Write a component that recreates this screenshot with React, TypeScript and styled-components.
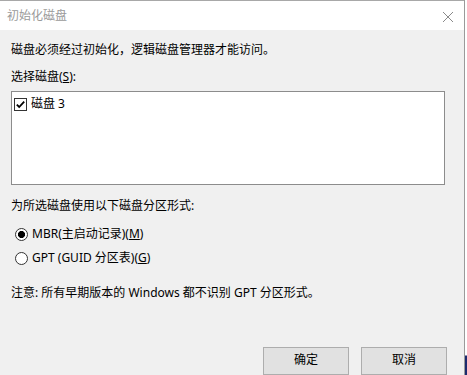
import React, { useState } from 'react'
import styled, { createGlobalStyle } from 'styled-components'

const GlobalStyle = createGlobalStyle`
  html, body {
    margin: 0;
    padding: 0;
    background: #ffffff;
    overflow: hidden;
  }
  body {
    font-family: "Noto Sans", "Noto Sans CJK SC", sans-serif;
    font-size: 12px;
  }
`

export default function App() {
  const [checked, setChecked] = useState(true)
  const [style, setStyle] = useState<'mbr' | 'gpt'>('mbr')

  return (
    <Page>
      <GlobalStyle />
      <Dialog>
        <TitleBar>
          <Title>初始化磁盘</Title>
          <CloseButton aria-label="关闭">
            <svg width="12" height="12" viewBox="0 0 12 12">
              <path d="M1 1 L11 11 M11 1 L1 11" stroke="#8a8a8a" strokeWidth="1" fill="none" />
            </svg>
          </CloseButton>
        </TitleBar>
        <Body>
          <Intro>磁盘必须经过初始化，逻辑磁盘管理器才能访问。</Intro>
          <Label>
            选择磁盘(<u>S</u>):
          </Label>
          <ListBox>
            <ListItem onClick={() => setChecked(c => !c)}>
              <CheckBox>
                <svg width="13" height="13" viewBox="0 0 13 13">
                  <rect x="0.5" y="0.5" width="12" height="12" fill="#fff" stroke="#333" />
                  {checked && (
                    <path d="M2.8 6.6 L5.2 9 L10.2 3.6" stroke="#000" strokeWidth="1.8" fill="none" />
                  )}
                </svg>
              </CheckBox>
              <span>磁盘 3</span>
            </ListItem>
          </ListBox>
          <SectionLabel>为所选磁盘使用以下磁盘分区形式:</SectionLabel>
          <RadioGroup>
            <RadioRow onClick={() => setStyle('mbr')}>
              <Radio $on={style === 'mbr'} />
              <span>
                MBR(主启动记录)(<u>M</u>)
              </span>
            </RadioRow>
            <RadioRow onClick={() => setStyle('gpt')}>
              <Radio $on={style === 'gpt'} />
              <span>
                GPT (GUID 分区表)(<u>G</u>)
              </span>
            </RadioRow>
          </RadioGroup>
          <Note>注意: 所有早期版本的 Windows 都不识别 GPT 分区形式。</Note>
          <Buttons>
            <Button>确定</Button>
            <Button>取消</Button>
          </Buttons>
        </Body>
      </Dialog>
      <Backdrop />
    </Page>
  )
}

const Page = styled.div`
  display: flex;
  width: 467px;
  height: 375px;
  overflow: hidden;
`

const Dialog = styled.div`
  width: 464px;
  height: 375px;
  display: flex;
  flex-direction: column;
  border-right: 1px solid #9a9a9a;
  flex-shrink: 0;
`

const Backdrop = styled.div`
  flex: 1;
  background: linear-gradient(to bottom, #ffffff 0, #ffffff 355px, #1c2a6e 356px);
`

const TitleBar = styled.div`
  height: 30px;
  box-sizing: border-box;
  border-top: 1px solid #a8a8a8;
  background: #ffffff;
  display: flex;
  align-items: center;
  justify-content: space-between;
  padding: 0 10px 0 7px;
  flex-shrink: 0;
`

const Title = styled.span`
  color: #9a9a9a;
  font-size: 12px;
  line-height: 16px;
`

const CloseButton = styled.div`
  width: 12px;
  height: 12px;
  display: flex;
  margin-top: 2px;
`

const Body = styled.div`
  flex: 1;
  background: #f0f0f0;
  padding: 12px 19px 0 11px;
  display: flex;
  flex-direction: column;
  color: #000;
  line-height: 16px;
  overflow: hidden;
`

const Intro = styled.div``

const Label = styled.div`
  margin-top: 11px;
`

const ListBox = styled.div`
  margin-top: 6px;
  height: 96px;
  box-sizing: border-box;
  background: #ffffff;
  border: 1px solid #8c8c8c;
  padding: 4px 2px;
`

const ListItem = styled.div`
  display: flex;
  align-items: center;
  gap: 4px;
  cursor: default;
`

const CheckBox = styled.span`
  display: flex;
  width: 13px;
  height: 13px;
`

const SectionLabel = styled.div`
  margin-top: 13px;
`

const RadioGroup = styled.div`
  margin-top: 12px;
  display: flex;
  flex-direction: column;
  gap: 8px;
  padding-left: 4px;
`

const RadioRow = styled.div`
  display: flex;
  align-items: center;
  gap: 4px;
  cursor: default;
`

const Radio = styled.span<{ $on: boolean }>`
  width: 13px;
  height: 13px;
  box-sizing: border-box;
  border: 1px solid #333;
  border-radius: 50%;
  background: ${p => (p.$on ? 'radial-gradient(circle, #000 0, #000 3.3px, #fff 3.8px)' : '#fff')};
  flex-shrink: 0;
`

const Note = styled.div`
  margin-top: 19px;
`

const Buttons = styled.div`
  margin-top: 46px;
  display: flex;
  justify-content: flex-end;
  gap: 12px;
  margin-right: -2px;
`

const Button = styled.div`
  width: 86px;
  height: 28px;
  box-sizing: border-box;
  background: #e1e1e1;
  border: 1px solid #adadad;
  display: flex;
  justify-content: center;
  padding-top: 4px;
  color: #000;
`
